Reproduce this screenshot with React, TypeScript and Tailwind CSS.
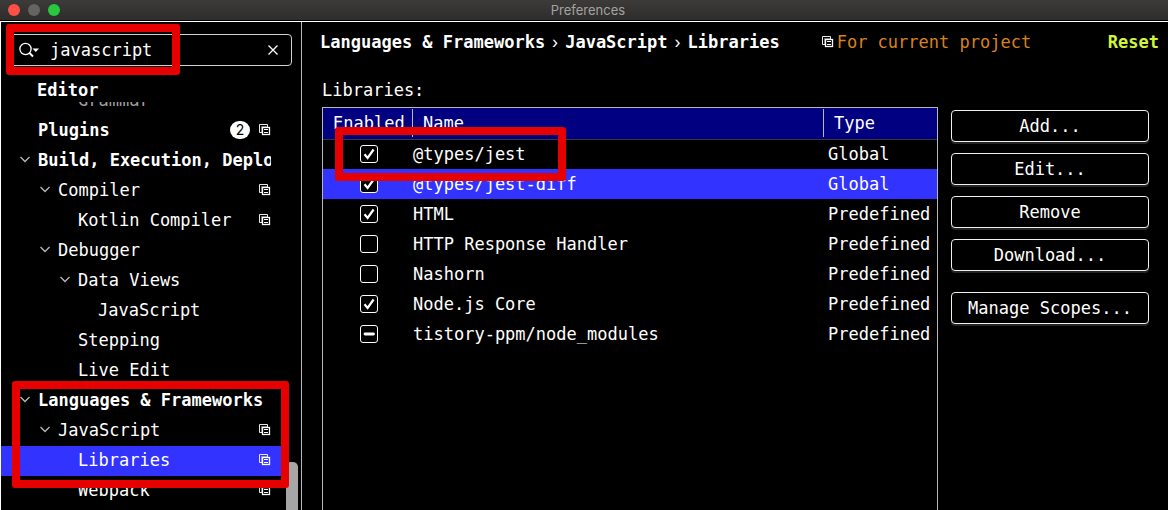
import { useState } from "react";

type TreeItem = {
  label: string;
  level: 0 | 1 | 2 | 3;
  open?: boolean;
  bold?: boolean;
  badge?: string;
  scoped?: boolean;
  selected?: boolean;
};

type Check = "on" | "off" | "mixed";
type Library = { id: string; name: string; type: string; check: Check };

const levelPadding = ["pl-[19px]", "pl-[39px]", "pl-[59px]", "pl-[79px]"];

const tree: TreeItem[] = [
  { label: "Plugins", level: 0, bold: true, badge: "2", scoped: true },
  { label: "Build, Execution, Deployment", level: 0, bold: true, open: true },
  { label: "Compiler", level: 1, open: true, scoped: true },
  { label: "Kotlin Compiler", level: 2, scoped: true },
  { label: "Debugger", level: 1, open: true },
  { label: "Data Views", level: 2, open: true },
  { label: "JavaScript", level: 3 },
  { label: "Stepping", level: 2 },
  { label: "Live Edit", level: 2 },
  { label: "Languages & Frameworks", level: 0, bold: true, open: true },
  { label: "JavaScript", level: 1, open: true, scoped: true },
  { label: "Libraries", level: 2, scoped: true, selected: true },
  { label: "Webpack", level: 2, scoped: true },
];

const initialLibraries: Library[] = [
  { id: "types-jest", name: "@types/jest", type: "Global", check: "on" },
  { id: "types-jest-diff", name: "@types/jest-diff", type: "Global", check: "on" },
  { id: "html", name: "HTML", type: "Predefined", check: "on" },
  { id: "http", name: "HTTP Response Handler", type: "Predefined", check: "off" },
  { id: "nashorn", name: "Nashorn", type: "Predefined", check: "off" },
  { id: "node-core", name: "Node.js Core", type: "Predefined", check: "on" },
  { id: "tistory", name: "tistory-ppm/node_modules", type: "Predefined", check: "mixed" },
];

function ScopeIcon() {
  return (
    <svg className="h-3 w-3 shrink-0" viewBox="0 0 12 12" fill="none" stroke="currentColor" aria-hidden="true">
      <path d="M3.5 8.5H0.5V0.5H8.5V3.5" stroke="#e8e8e8" />
      <path d="M2.5 8V2.5H8" stroke="#fff" strokeOpacity="0.4" />
      <rect x="3.5" y="3.5" width="7" height="7" strokeWidth="1.3" />
      <path d="M5 5.5H9M5 8.5H9" strokeWidth="1.2" />
    </svg>
  );
}

function Chevron() {
  return (
    <svg className="h-3 w-full" viewBox="0 0 10 12" fill="none" stroke="#b4b4b4" strokeWidth="1.4" aria-hidden="true">
      <path d="M0.5 3L5 7.5L9.5 3" />
    </svg>
  );
}

function TreeRow({ item }: { item: TreeItem }) {
  return (
    <button
      type="button"
      role="treeitem"
      aria-expanded={item.open}
      aria-selected={item.selected ?? false}
      className={`flex h-[30px] w-full shrink-0 items-center pr-[15px] pb-[2px] text-left ${levelPadding[item.level]} ${
        item.selected ? "bg-[#3333ff]" : ""
      } ${item.bold ? "font-bold" : ""}`}
    >
      <span className="mr-2 w-[10px] shrink-0">{item.open && <Chevron />}</span>
      <span className="min-w-0 flex-1 overflow-hidden whitespace-nowrap">{item.label}</span>
      {item.badge && (
        <span className="mr-[9px] flex h-[18px] w-5 items-center justify-center rounded-full bg-white font-['Inter',sans-serif] text-sm font-normal text-black">
          {item.badge}
        </span>
      )}
      {item.scoped && <ScopeIcon />}
    </button>
  );
}

function SideButton({ children }: { children: string }) {
  return (
    <button
      type="button"
      className="h-8 w-full rounded-[4px] border border-[#f0f0f0] bg-black text-center whitespace-nowrap shadow-[0_2px_0_#242424]"
    >
      {children}
    </button>
  );
}

function Sidebar() {
  const [query, setQuery] = useState("javascript");
  return (
    <aside className="relative flex w-[301px] shrink-0 flex-col border-r border-[#b8b8b8]">
      <div className="mx-[9px] mt-3 flex h-8 shrink-0 items-center rounded-[4px] border border-[#d0d0d0] pl-2 pr-3">
        <svg className="h-4 w-5 shrink-0" viewBox="0 0 20 16" fill="none" stroke="#fff" strokeWidth="1.3" aria-hidden="true">
          <circle cx="6.5" cy="7" r="5.6" />
          <path d="M10.5 11L14 14.5" strokeWidth="2" />
          <path d="M13.5 6.5H20L16.75 10Z" fill="#fff" stroke="none" />
        </svg>
        <input
          type="text"
          aria-label="Search settings"
          value={query}
          onChange={(e) => setQuery(e.target.value)}
          className="ml-[11px] h-6 min-w-0 flex-1 bg-transparent outline-none"
        />
        <button type="button" aria-label="Clear search" onClick={() => setQuery("")}>
          <svg className="h-3 w-3" viewBox="0 0 12 12" stroke="#fff" strokeWidth="1.3" aria-hidden="true">
            <path d="M1.5 1.5L10.5 10.5M10.5 1.5L1.5 10.5" />
          </svg>
        </button>
      </div>

      <div className="mt-[10px] flex min-h-0 flex-1">
        <div role="tree" aria-label="Settings" className="flex min-w-0 flex-1 flex-col overflow-hidden">
          <div className="z-10 h-[26px] shrink-0 bg-black pl-9 font-bold leading-7">Editor</div>
          <div className="-mt-4 flex h-[30px] shrink-0 items-center pb-[2px] pl-[77px] text-[#a0a0a0]">Grammar</div>
          {tree.map((item, i) => (
            <TreeRow key={i} item={item} />
          ))}
        </div>
        <div className="mr-[3px] mt-[386px] w-3 shrink-0 rounded-t-[5px] bg-[#a6a6a6]" />
      </div>

      <div className="pointer-events-none absolute left-[5px] top-[2px] z-20 h-[51px] w-[174px] rounded-[3px] border-8 border-[#e60000]" />
      <div className="pointer-events-none absolute left-[11px] top-[359px] z-20 h-[107px] w-[277px] rounded-[3px] border-8 border-[#e60000]" />
    </aside>
  );
}

function LibraryRow({ lib, selected, onToggle }: { lib: Library; selected: boolean; onToggle: () => void }) {
  return (
    <tr className={`h-[30px] ${selected ? "bg-[#3333ff]" : ""}`}>
      <td className="p-0">
        <span className="ml-[37px] grid h-[18px] w-[18px]">
          <input
            id={lib.id}
            type="checkbox"
            checked={lib.check === "on"}
            ref={(el) => {
              if (el) el.indeterminate = lib.check === "mixed";
            }}
            onChange={onToggle}
            className="col-start-1 row-start-1 h-[18px] w-[18px] appearance-none rounded-[3px] border border-white bg-black"
          />
          <svg
            className="pointer-events-none col-start-1 row-start-1 h-[18px] w-[18px]"
            viewBox="0 0 18 18"
            fill="none"
            stroke="#fff"
            aria-hidden="true"
          >
            {lib.check === "on" && <path d="M4.5 9.3L7.6 13L13.6 4.5" strokeWidth="2.2" />}
            {lib.check === "mixed" && <path d="M5 9H13.5" strokeWidth="2.8" strokeLinecap="round" />}
          </svg>
        </span>
      </td>
      <td className="p-0">
        <label htmlFor={lib.id} className="whitespace-nowrap">
          {lib.name}
        </label>
      </td>
      <td className="p-0 pl-1">{lib.type}</td>
    </tr>
  );
}

function Main() {
  const [libs, setLibs] = useState(initialLibraries);
  const toggle = (id: string) =>
    setLibs(libs.map((l) => (l.id === id ? { ...l, check: l.check === "on" ? "off" : "on" } : l)));

  return (
    <main className="flex min-w-0 flex-1 flex-col">
      <header className="mr-[9px] ml-[18px] flex h-10 shrink-0 items-center whitespace-nowrap">
        <nav aria-label="Breadcrumb" className="flex items-center font-bold">
          <a href="#languages">Languages &amp; Frameworks</a>
          <span className="w-5 text-center font-['Inter',sans-serif] text-base font-normal">›</span>
          <a href="#javascript">JavaScript</a>
          <span className="w-5 text-center font-['Inter',sans-serif] text-base font-normal">›</span>
          <a href="#libraries">Libraries</a>
        </nav>
        <span className="ml-[42px] flex items-center gap-[3px]">
          <ScopeIcon />
          <span className="text-[#d9801f]">For current project</span>
        </span>
        <button type="button" className="ml-auto font-bold text-[#d2f53c]">
          Reset
        </button>
      </header>

      <h2 className="mt-[14px] ml-5 h-[31px] shrink-0 leading-7">Libraries:</h2>

      <div className="ml-5 mr-[19px] flex min-h-0 flex-1 gap-[13px]">
        <div className="relative min-w-0 flex-1 border border-b-0 border-[#b8b8b8]">
          <table className="w-full table-fixed border-collapse">
            <colgroup>
              <col className="w-[90px]" />
              <col />
              <col className="w-[113px]" />
            </colgroup>
            <thead>
              <tr className="h-[31px] border-b border-[#383838] bg-[#000080] text-left">
                <th className="p-0 py-px font-normal">
                  <div className="h-7 border-r border-[#b8b8b8] pl-[10px] leading-7">Enabled</div>
                </th>
                <th className="p-0 py-px font-normal">
                  <div className="h-7 border-r border-[#b8b8b8] pl-[10px] leading-7">Name</div>
                </th>
                <th className="p-0 py-px pl-[10px] font-normal">Type</th>
              </tr>
            </thead>
            <tbody>
              {libs.map((lib) => (
                <LibraryRow
                  key={lib.id}
                  lib={lib}
                  selected={lib.id === "types-jest-diff"}
                  onToggle={() => toggle(lib.id)}
                />
              ))}
            </tbody>
          </table>
          <div className="pointer-events-none absolute left-3 top-[19px] z-20 h-[54px] w-[231px] rounded-[3px] border-8 border-[#e60000]" />
        </div>

        <div className="flex w-[198px] shrink-0 flex-col gap-[11px] pt-[3px]">
          <SideButton>Add...</SideButton>
          <SideButton>Edit...</SideButton>
          <SideButton>Remove</SideButton>
          <SideButton>Download...</SideButton>
          <div className="mt-[10px]">
            <SideButton>Manage Scopes...</SideButton>
          </div>
        </div>
      </div>
    </main>
  );
}

export default function App() {
  return (
    <div className="flex h-screen flex-col overflow-hidden bg-black font-['DejaVu_Sans_Mono',monospace] text-[17px] leading-6 text-white">
      <div className="grid h-[21px] shrink-0 grid-cols-[1fr_auto_1fr] items-center border-b border-black bg-linear-to-b from-[#3c3b3a] to-[#2e2d2c] pl-2">
        <div className="flex gap-2">
          <button type="button" aria-label="Close" className="h-3 w-3 rounded-full bg-[#ff5148]" />
          <button type="button" aria-label="Minimize" className="h-3 w-3 rounded-full bg-[#646464]" />
          <button type="button" aria-label="Zoom" className="h-3 w-3 rounded-full bg-[#28c93f]" />
        </div>
        <h1 className="font-['Inter',sans-serif] text-[13px] leading-5 text-[#a3a3a2]">Preferences</h1>
      </div>
      <div className="flex min-h-0 flex-1 border-t border-l border-white">
        <Sidebar />
        <Main />
      </div>
    </div>
  );
}
